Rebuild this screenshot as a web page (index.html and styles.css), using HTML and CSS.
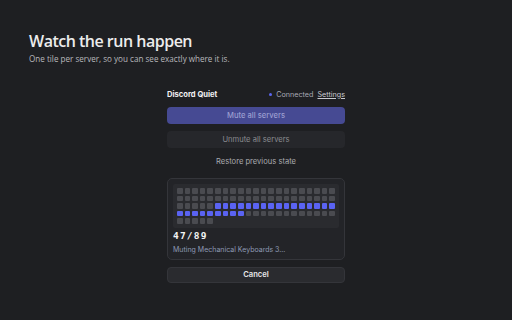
FILE: index.html
```html
<!DOCTYPE html>
<html>
<head>
<meta charset="utf-8">
<link rel="stylesheet" href="styles.css">
</head>
<body>
<div class="page">
  <header class="intro">
    <h1 class="title">Watch the run happen</h1>
    <p class="subtitle">One tile per server, so you can see exactly where it is.</p>
  </header>
  <main class="panel">
    <div class="bar">
      <span class="brand">Discord Quiet</span>
      <span class="status"><span class="dot"></span>Connected <a class="link">Settings</a></span>
    </div>
    <button class="btn btn-primary">Mute all servers</button>
    <button class="btn btn-secondary">Unmute all servers</button>
    <div class="restore">Restore previous state</div>
    <section class="card">
      <div class="grid">
        <i class="t"></i><i class="t"></i><i class="t"></i><i class="t"></i><i class="t"></i><i class="t"></i><i class="t"></i><i class="t"></i><i class="t"></i><i class="t"></i><i class="t"></i><i class="t"></i><i class="t"></i><i class="t"></i><i class="t"></i><i class="t"></i><i class="t"></i><i class="t"></i><i class="t"></i><i class="t"></i><i class="t"></i>
        <i class="t"></i><i class="t"></i><i class="t"></i><i class="t"></i><i class="t"></i><i class="t"></i><i class="t"></i><i class="t"></i><i class="t"></i><i class="t"></i><i class="t"></i><i class="t"></i><i class="t"></i><i class="t"></i><i class="t"></i><i class="t"></i><i class="t"></i><i class="t"></i><i class="t"></i><i class="t"></i><i class="t"></i>
        <i class="t"></i><i class="t"></i><i class="t"></i><i class="t"></i><i class="t"></i><i class="t on"></i><i class="t on"></i><i class="t on"></i><i class="t on"></i><i class="t on"></i><i class="t on"></i><i class="t on"></i><i class="t on"></i><i class="t on"></i><i class="t on"></i><i class="t on"></i><i class="t on"></i><i class="t on"></i><i class="t on"></i><i class="t on"></i><i class="t on"></i>
        <i class="t on"></i><i class="t on"></i><i class="t on"></i><i class="t on"></i><i class="t on"></i><i class="t on"></i><i class="t on"></i><i class="t on"></i><i class="t on"></i><i class="t"></i><i class="t"></i><i class="t"></i><i class="t"></i><i class="t"></i><i class="t"></i><i class="t"></i><i class="t"></i><i class="t"></i><i class="t"></i><i class="t"></i><i class="t"></i>
        <i class="t"></i><i class="t"></i><i class="t"></i><i class="t"></i><i class="t"></i>
      </div>
      <div class="count">47/89</div>
      <div class="current">Muting Mechanical Keyboards 3...</div>
    </section>
    <button class="btn btn-cancel">Cancel</button>
  </main>
</div>
</body>
</html>
```
FILE: styles.css
```css
* { box-sizing: border-box; }
html, body { margin: 0; padding: 0; background: #1e1f22; }
body { width: 512px; height: 320px; overflow: hidden; font-family: "Inter", "Noto Sans", sans-serif; }
.page { padding: 30px 0 0 0; }
.intro { padding-left: 29px; }
.title { margin: 0; font-family: "Open Sans", sans-serif; font-weight: 600; font-size: 16px; letter-spacing: -0.5px; line-height: 22px; color: #ececec; }
.subtitle { margin: 1px 0 0; font-family: "Open Sans", sans-serif; font-size: 8.1px; line-height: 11px; color: #b8b8bc; }
.panel { width: 178px; margin: 25px auto 0; display: flex; flex-direction: column; }
.bar { display: flex; justify-content: space-between; align-items: center; height: 10px; font-size: 7.2px; }
.brand { font-weight: 700; color: #f2f2f4; font-size: 7.6px; }
.status { color: #a7a9b4; display: flex; align-items: center; }
.dot { width: 3px; height: 3px; border-radius: 50%; background: #5b66f0; margin-right: 4px; }
.link { color: #c9cad0; text-decoration: underline; margin-left: 4px; }
.btn { display: block; width: 100%; margin: 0; border: 0; border-radius: 4px; font-family: inherit; font-size: 7.6px; height: 17px; padding: 0; }
.btn-primary { margin-top: 8px; background: #464a93; color: #9b9ed0; font-weight: 500; }
.btn-secondary { margin-top: 7px; background: #26272b; color: #8a8b90; }
.restore { height: 20px; margin-top: 4px; line-height: 20px; text-align: center; font-size: 7.6px; color: #a9aaae; }
.card { margin-top: 6px; border: 1px solid #34353a; border-radius: 5px; background: #232428; padding: 5px; }
.grid { background: #2a2b2f; border-radius: 2px; padding: 4px; display: grid; grid-template-columns: repeat(21, 1fr); gap: 2px; }
.t { display: block; height: 5.6px; border-radius: 1px; background: #4a4b50; }
.t.on { background: #5a63f2; }
.count { margin-top: 3px; font-family: "DejaVu Sans Mono", monospace; font-weight: 700; font-size: 9.5px; letter-spacing: 1.2px; line-height: 10px; color: #f4f4f4; }
.current { margin-top: 4px; font-size: 7px; line-height: 9px; color: #8e9ab4; }
.btn-cancel { margin-top: 7px; height: 16px; background: #2a2b2f; border: 1px solid #34353a; color: #e8e8ea; font-weight: 600; }
```
